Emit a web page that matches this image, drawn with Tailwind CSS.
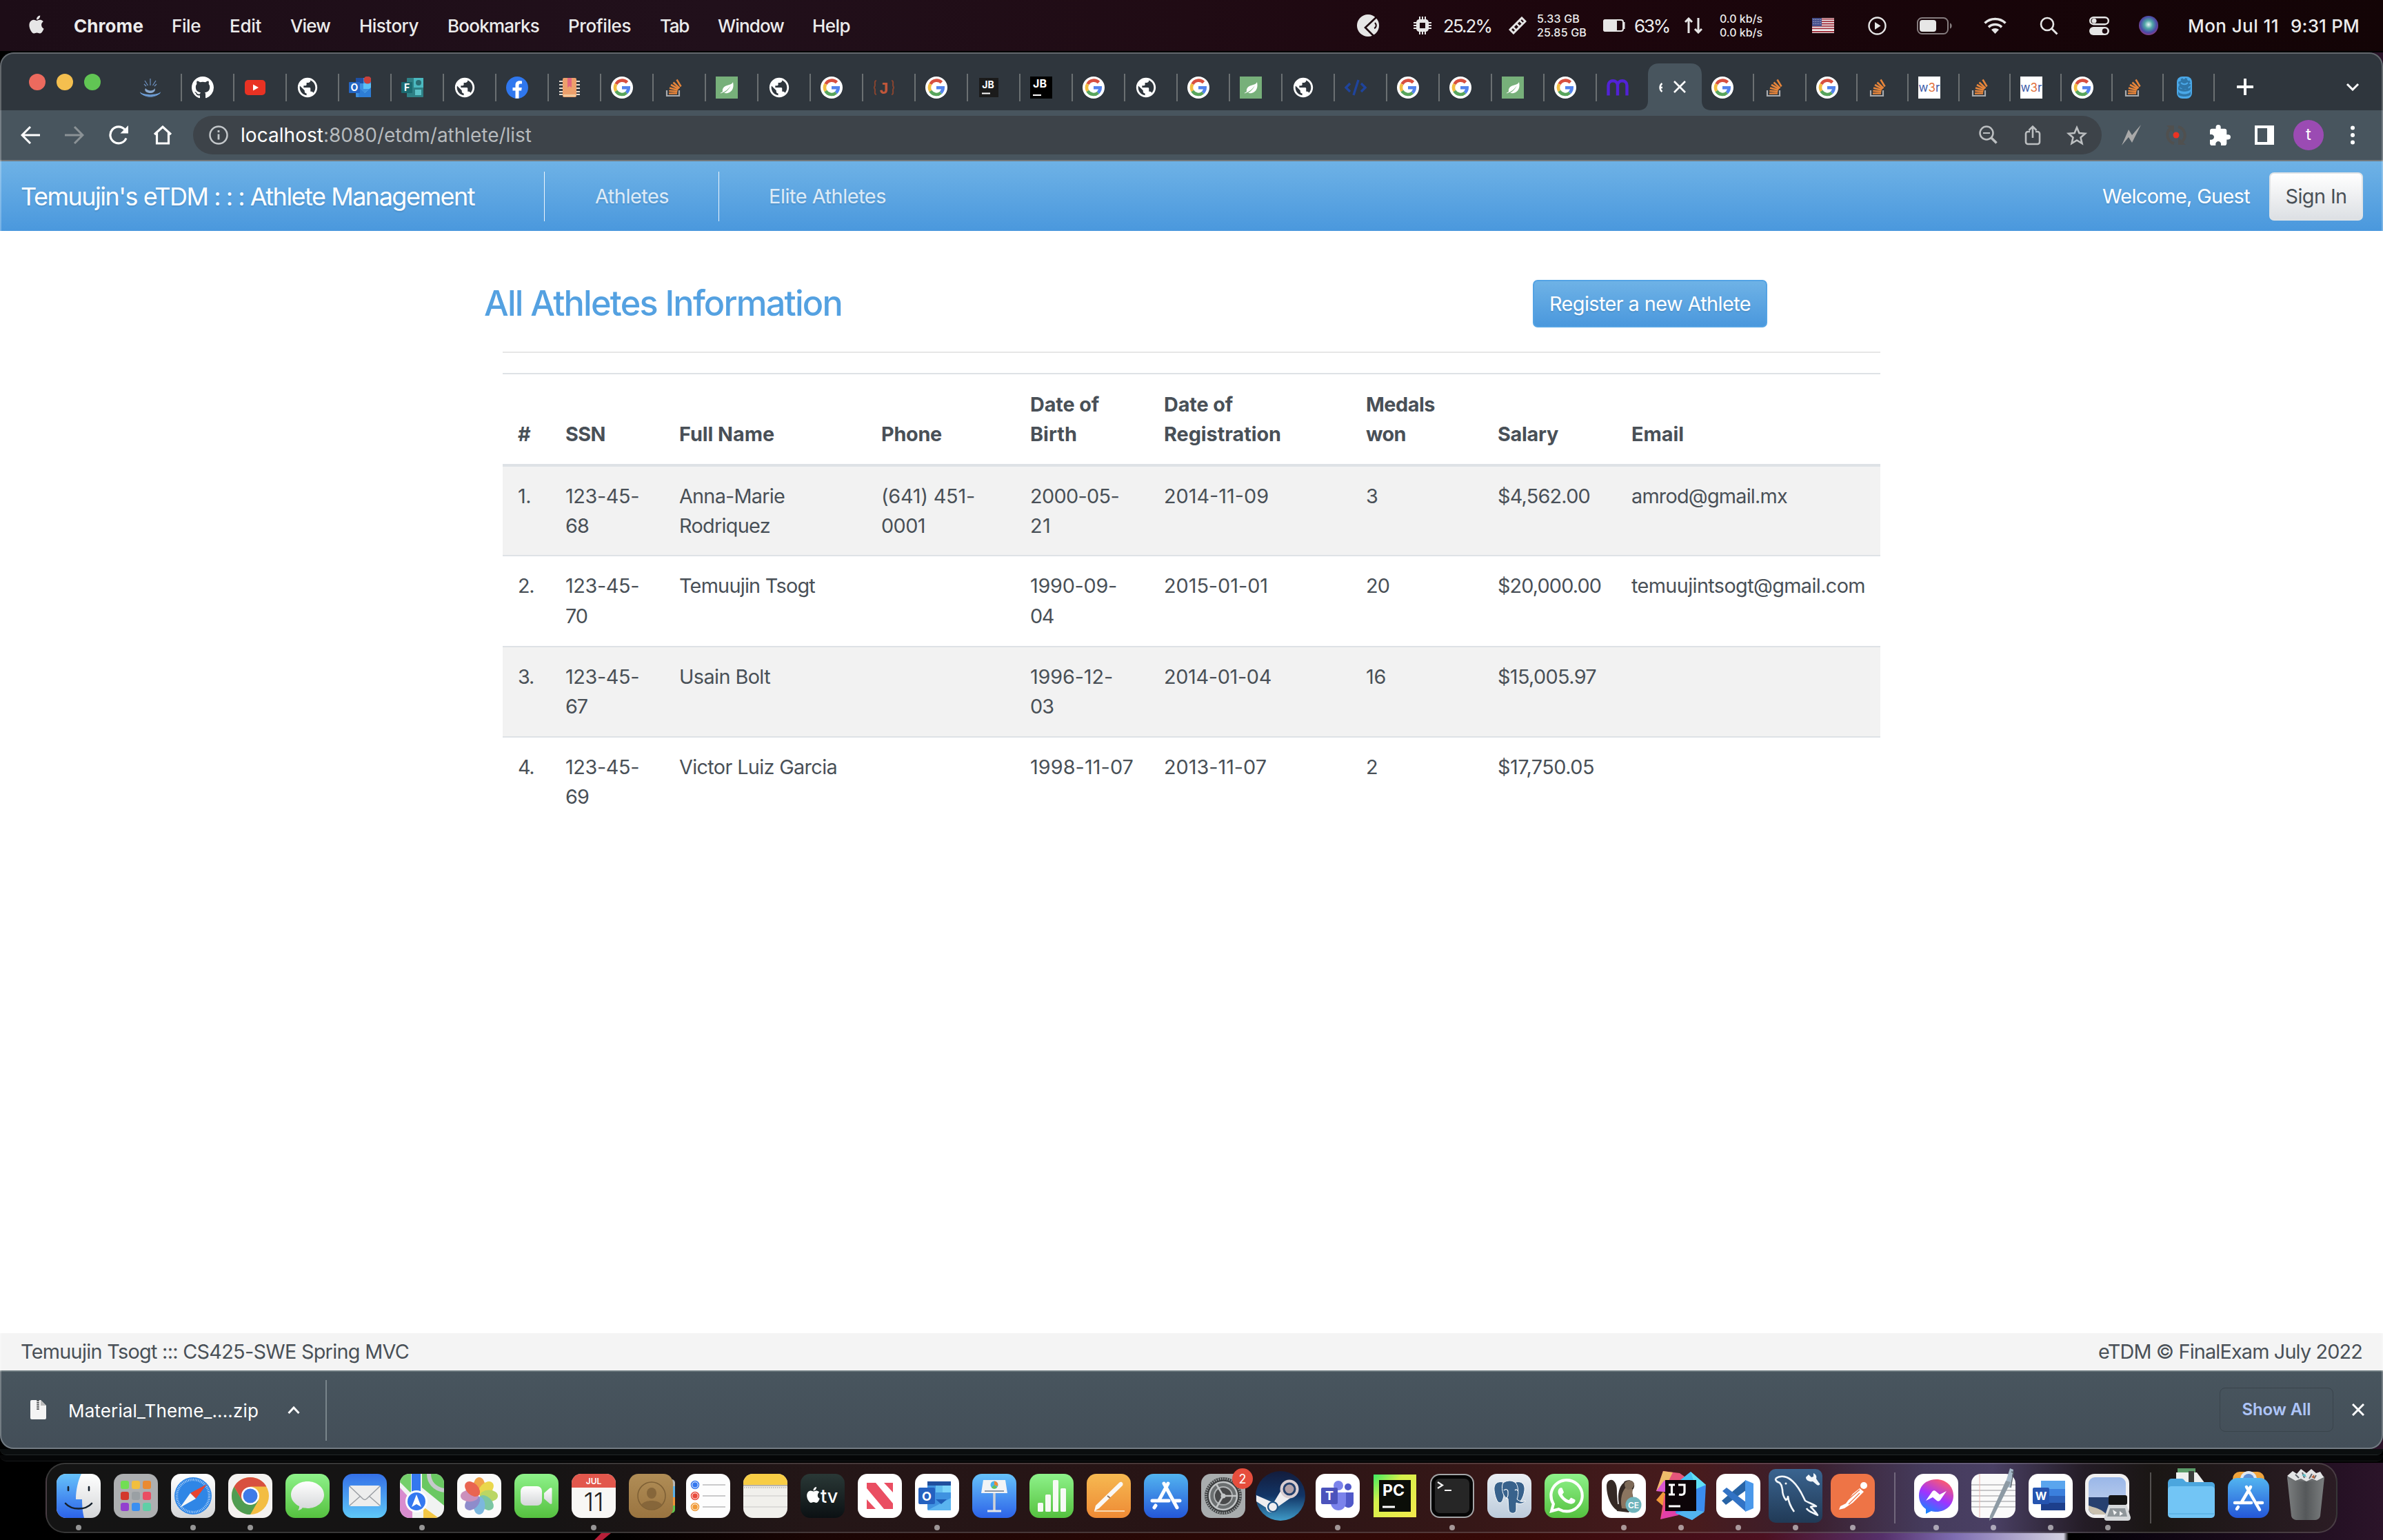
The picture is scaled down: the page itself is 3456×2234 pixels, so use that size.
<!DOCTYPE html>
<html lang="en">
<head>
<meta charset="utf-8">
<title>Athlete Management</title>
<script src="https://cdn.jsdelivr.net/npm/@tailwindcss/browser@4"></script>
</head>
<body class="w-[3456px] h-[2234px] overflow-hidden bg-black font-['Inter','Liberation_Sans',sans-serif]">

<svg class="absolute h-0 w-0" xmlns="http://www.w3.org/2000/svg">
  <defs>
    <linearGradient id="gGreen" x1="0" y1="0" x2="0" y2="1"><stop offset="0" stop-color="#8ef28a"/><stop offset="1" stop-color="#55c13f"/></linearGradient>
    <linearGradient id="gBlue" x1="0" y1="0" x2="0" y2="1"><stop offset="0" stop-color="#52b4f0"/><stop offset="1" stop-color="#2457d8"/></linearGradient>
    <linearGradient id="gBlueUp" x1="0" y1="0" x2="0" y2="1"><stop offset="0" stop-color="#3470e8"/><stop offset="1" stop-color="#5fc8f8"/></linearGradient>
    <linearGradient id="gWhite" x1="0" y1="0" x2="0" y2="1"><stop offset="0" stop-color="#ffffff"/><stop offset="1" stop-color="#d4d6d8"/></linearGradient>
    <linearGradient id="gOrange" x1="0" y1="0" x2="0" y2="1"><stop offset="0" stop-color="#f6b951"/><stop offset="1" stop-color="#ee8a35"/></linearGradient>
    <linearGradient id="gKey" x1="0" y1="0" x2="0" y2="1"><stop offset="0" stop-color="#66c2fb"/><stop offset="1" stop-color="#2c62e8"/></linearGradient>
    <linearGradient id="gTv" x1="0" y1="0" x2="0" y2="1"><stop offset="0" stop-color="#2a3836"/><stop offset="1" stop-color="#0b1013"/></linearGradient>
    <linearGradient id="gBrown" x1="0" y1="0" x2="0" y2="1"><stop offset="0" stop-color="#b08d56"/><stop offset="1" stop-color="#9a7440"/></linearGradient>
    <linearGradient id="gSteam" x1="0" y1="0" x2="0" y2="1"><stop offset="0" stop-color="#131c3c"/><stop offset=".5" stop-color="#123566"/><stop offset="1" stop-color="#3f9bc8"/></linearGradient>
    <linearGradient id="gPg" x1="0" y1="0" x2="0" y2="1"><stop offset="0" stop-color="#eaeff4"/><stop offset="1" stop-color="#bccbdb"/></linearGradient>
    <linearGradient id="gMysql" x1="0" y1="0" x2="0" y2="1"><stop offset="0" stop-color="#3a6490"/><stop offset="1" stop-color="#213a56"/></linearGradient>
    <linearGradient id="gMsg" x1=".7" y1="0" x2=".2" y2="1"><stop offset="0" stop-color="#ff5b6c"/><stop offset=".5" stop-color="#a033ff"/><stop offset="1" stop-color="#0a8cff"/></linearGradient>
    <linearGradient id="gTrash" x1="0" y1="0" x2="1" y2="0"><stop offset="0" stop-color="#7b7e7f"/><stop offset=".5" stop-color="#55585a"/><stop offset="1" stop-color="#7b7e7f"/></linearGradient>
    <linearGradient id="gPc" x1="0" y1="0" x2="1" y2="1"><stop offset="0" stop-color="#3bea62"/><stop offset=".35" stop-color="#d6f04b"/><stop offset="1" stop-color="#f4ea4c"/></linearGradient>
    <linearGradient id="gSea" x1="0" y1="0" x2="0" y2="1"><stop offset="0" stop-color="#9ab7e8"/><stop offset="1" stop-color="#c6d4ee"/></linearGradient>
    <radialGradient id="gSiri" cx=".5" cy=".45" r=".6"><stop offset="0" stop-color="#e9f6f6"/><stop offset=".35" stop-color="#4fa7a5"/><stop offset=".7" stop-color="#4a4aa8"/><stop offset="1" stop-color="#a33c7a"/></radialGradient>
  </defs>

  <!-- favicons -->
  <symbol id="f-java" viewBox="0 0 32 32"><path d="M16 13V3M12.500 13 8 6M19.500 13l4.500-7M10 14l-3-3M22 14l3-3" stroke="#6f94c4" stroke-width="1.200" fill="none"/><path d="M1 22c0 9 30 9 30 0-3 5.500-27 5.500-30 0z" fill="#6f9fd8"/><path d="M9 17c-3 5 4 7.500 8 7s7-3 5.500-7c-1 4-10 5-13.500 0z" fill="#8aa9cf"/><path d="M5 26c5 4 17 4 22 0-4 5-18 5-22 0z" fill="#6f9fd8"/></symbol>
  <symbol id="f-github" viewBox="0 0 16 16"><path fill="#fff" d="M8 0C3.580 0 0 3.580 0 8c0 3.540 2.290 6.530 5.470 7.590.4.070.55-.17.55-.38 0-.19-.01-.82-.01-1.490-2.010.37-2.530-.49-2.690-.94-.09-.23-.48-.94-.82-1.130-.28-.15-.68-.52-.01-.53.63-.01 1.080.58 1.230.82.72 1.210 1.870.87 2.330.66.07-.52.28-.87.51-1.070-1.780-.2-3.640-.89-3.640-3.950 0-.87.31-1.590.82-2.150-.08-.2-.36-1.020.08-2.120 0 0 .67-.21 2.200.82.64-.18 1.320-.27 2-.27s1.360.09 2 .27c1.530-1.040 2.200-.82 2.200-.82.44 1.100.16 1.920.08 2.120.51.56.82 1.270.82 2.150 0 3.070-1.870 3.750-3.650 3.950.29.25.54.73.54 1.480 0 1.070-.01 1.930-.01 2.200 0 .21.15.46.55.38A8.010 8.010 0 0 0 16 8c0-4.420-3.580-8-8-8z"/></symbol>
  <symbol id="f-yt" viewBox="0 0 32 32"><rect x="1" y="5" width="30" height="22" rx="5" fill="#e93223"/><path d="M13 11.500v9l8-4.500z" fill="#fff"/></symbol>
  <symbol id="f-globe" viewBox="0 0 32 32"><path transform="translate(-1 -1) scale(1.417)" fill="#fff" d="M12 2C6.480 2 2 6.480 2 12s4.480 10 10 10 10-4.480 10-10S17.520 2 12 2zm-1 17.930c-3.950-.49-7-3.850-7-7.930 0-.62.08-1.210.21-1.790L9 15v1c0 1.100.9 2 2 2v1.930zm6.900-2.540c-.26-.81-1-1.390-1.900-1.390h-1v-3c0-.55-.45-1-1-1H8v-2h2c.55 0 1-.45 1-1V7h2c1.100 0 2-.9 2-2v-.41c2.930 1.190 5 4.060 5 7.410 0 2.080-.8 3.970-2.100 5.390z"/></symbol>
  <symbol id="f-outlook" viewBox="0 0 32 32"><rect x="10" y="2" width="22" height="28" rx="1" fill="#3c8fe0"/><path d="M10 2h11v8H10z" fill="#1e4fa3"/><path d="M21 10h11v8H21z" fill="#5cc0f5"/><path d="M14 30l18-14v14z" fill="#52a9ea"/><path d="M14 16l9 8 9-8v14H14z" fill="#2d7dd6"/><rect x="0" y="8" width="16" height="16" rx="1" fill="#2566c4"/><text x="8" y="21" font-size="14" font-weight="700" fill="#fff" text-anchor="middle">O</text><circle cx="27" cy="5" r="5.500" fill="#c8403a"/></symbol>
  <symbol id="f-forms" viewBox="0 0 32 32"><rect x="8" y="2" width="24" height="28" rx="1" fill="#2f8186"/><path d="M18 2h14v14H18z" fill="#4bb9c0"/><circle cx="25" cy="9" r="4" fill="#2a6d73"/><rect x="20" y="19" width="9" height="8" fill="#5cc2c8"/><rect x="0" y="8" width="16" height="16" rx="1" fill="#1b6a70"/><text x="8" y="21" font-size="14" font-weight="700" fill="#fff" text-anchor="middle">F</text></symbol>
  <symbol id="f-fb" viewBox="0 0 32 32"><circle cx="16" cy="16" r="16" fill="#2f77ee"/><path fill="#fff" d="M13.500 31.800V20.500h-4V16h4v-3.500c0-4 2.400-6.200 6-6.200 1.700 0 3.500.3 3.500.3v3.900h-2c-2 0-2.500 1.200-2.500 2.500v3h4.300l-.7 4.500h-3.600v11.300z"/></symbol>
  <symbol id="f-book" viewBox="0 0 32 32"><path d="M1 7h6M1 12h6M1 17h6M1 22h6M1 26h6M25 7h6M25 12h6M25 17h6M25 22h6M25 26h6" stroke="#e8ddd2" stroke-width="2"/><rect x="6" y="2" width="20" height="28" rx="2" fill="#eda06c"/><path d="M13 2h6v14l-3-2-3 2z" fill="#e4687c"/><path d="M7 26h18v3H7z" fill="#f3c99a"/></symbol>
  <symbol id="f-google" viewBox="0 0 32 32"><circle cx="16" cy="16" r="16" fill="#fff"/><g fill="none" stroke-width="4.600"><path d="M23.500 8.600A10 10 0 0 0 7.500 11" stroke="#d8503f"/><path d="M7.400 11a10 10 0 0 0 0 10" stroke="#f2bd42"/><path d="M7.400 21a10 10 0 0 0 15.200 2.500" stroke="#58a55c"/><path d="M22.500 23.500A10 10 0 0 0 25.700 16.300H16" stroke="#5383ec"/></g></symbol>
  <symbol id="f-so" viewBox="0 0 32 32"><path d="M5 20v8h18v-8" fill="none" stroke="#a9abae" stroke-width="2.200"/><g stroke="#e7853a" stroke-width="2.600"><path d="M8 24.500h12"/><path d="M8.300 20.800l12 1.200"/><path d="M9 16.500l11.800 3.200"/><path d="M11 12l11 6"/><path d="M14.500 8.500l9 8.500"/><path d="M19.500 4.500l6 10"/></g></symbol>
  <symbol id="f-leaf" viewBox="0 0 32 32"><rect width="32" height="32" fill="#77b07a"/><path fill="#fff" d="M25 8c1.500 7 0 12-5 15-3 1.500-6 1.500-8 .8 4-2 7.500-6 10-10.800-3.500 5-7.500 8.500-12.500 10.500L7 24.500v-1c1.500-.4 2.500-1 3-2C9 16 14 13.500 18 12.500c3-.8 6-2 7-4.500z"/></symbol>
  <symbol id="f-jx" viewBox="0 0 32 32"><text x="16" y="25" font-size="24" font-weight="700" font-family="Liberation Mono" fill="#c0573a" text-anchor="middle">J</text><path d="M5 6c-3 0-2 4-2 6s-1 4-2 4c1 0 2 2 2 4s-1 6 2 6M27 6c3 0 2 4 2 6s1 4 2 4c-1 0-2 2-2 4s1 6-2 6" fill="none" stroke="#87442f" stroke-width="2"/></symbol>
  <symbol id="f-jb" viewBox="0 0 32 32"><rect x="2" y="2" width="28" height="28" fill="#1b1b1b"/><text x="15" y="17" font-size="14" font-weight="700" fill="#fff" text-anchor="middle">JB</text><path d="M6 24.500h12" stroke="#fff" stroke-width="2"/></symbol>
  <symbol id="f-jb2" viewBox="0 0 32 32"><rect width="32" height="32" fill="#000"/><text x="14" y="16" font-size="16" font-weight="700" fill="#fff" text-anchor="middle">JB</text><path d="M4 27h12" stroke="#fff" stroke-width="2.200"/></symbol>
  <symbol id="f-code" viewBox="0 0 32 32"><path d="M8 10l-6 6 6 6M24 10l6 6-6 6M20 5l-7 22" fill="none" stroke="#1f449c" stroke-width="3.400"/></symbol>
  <symbol id="f-m" viewBox="0 0 32 32"><path d="M2.500 27.500V13c0-9 13.500-9 13.500 0v14.500M16 13c0-9 13.500-9 13.500 0v14.500" fill="none" stroke="#5222d6" stroke-width="4.400"/></symbol>
  <symbol id="f-w3r" viewBox="0 0 32 32"><rect width="32" height="32" fill="#fff"/><text x="16" y="22" font-size="17" text-anchor="middle" fill="#3c5ba9">w<tspan fill="#e2703a">3</tspan>r</text></symbol>
  <symbol id="f-db" viewBox="0 0 32 32"><rect x="5" y="0" width="22" height="32" rx="8" fill="#4aa8e8"/><circle cx="16" cy="11" r="7.500" fill="#2f76a8" stroke="#2f76a8" stroke-width="3" stroke-dasharray="3 3"/><path d="M7 14c1 6 17 6 18 0v4c-1 5-17 5-18 0zM7 21c1 6 17 6 18 0v5c-1 4-17 4-18 0z" fill="#2f76a8"/><path d="M11 9c3 3 7 3 10 0" stroke="#4aa8e8" stroke-width="2" fill="none"/></symbol>

  <!-- dock -->
  <symbol id="d-finder" viewBox="0 0 64 64"><rect width="64" height="64" rx="14" fill="url(#gWhite)"/><path d="M14 0h22c-5 10-8 24-8 37h9c0 10 1 20 3 27H14A14 14 0 0 1 0 50V14A14 14 0 0 1 14 0z" fill="url(#gKey)"/><path d="M17 19v5M47 19v5M13 43c9 10 29 10 38 0" stroke="#14202c" stroke-width="2.600" stroke-linecap="round" fill="none"/></symbol>
  <symbol id="d-launch" viewBox="0 0 64 64"><rect width="64" height="64" rx="14" fill="#adafb1"/><g><rect x="10" y="10" width="12" height="12" rx="3" fill="#72de54"/><rect x="26" y="10" width="12" height="12" rx="3" fill="#f2bf3e"/><rect x="42" y="10" width="12" height="12" rx="3" fill="#ea8a32"/><rect x="10" y="26" width="12" height="12" rx="3" fill="#d3382c"/><rect x="26" y="26" width="12" height="12" rx="3" fill="#9aa0a4"/><rect x="42" y="26" width="12" height="12" rx="3" fill="#ea4e62"/><rect x="10" y="42" width="12" height="12" rx="3" fill="#9340cf"/><rect x="26" y="42" width="12" height="12" rx="3" fill="#3b8ff0"/><rect x="42" y="42" width="12" height="12" rx="3" fill="#5fcfa6"/></g></symbol>
  <symbol id="d-safari" viewBox="0 0 64 64"><rect width="64" height="64" rx="14" fill="url(#gWhite)"/><circle cx="32" cy="32" r="27" fill="#2f86e6"/><circle cx="32" cy="32" r="23.500" fill="none" stroke="#cfe4fa" stroke-width="3.500" stroke-dasharray=".8 1.650"/><path d="M52 15 36 36l-8-8z" fill="#e8442f"/><path d="M13 49l15-21 8 8z" fill="#f4f6f8"/></symbol>
  <symbol id="d-chrome" viewBox="0 0 64 64"><rect width="64" height="64" rx="14" fill="#f4f2f0"/><circle cx="32" cy="32" r="27" fill="#f3bd42"/><path d="M8.600 18.500 20.300 38.800 43.700 38.800 32 59A27 27 0 0 1 8.600 18.500z" fill="#4f9d52"/><path d="M8.600 18.500A27 27 0 0 1 55.400 18.500H32L20.300 38.800z" fill="#d8503f"/><circle cx="32" cy="32" r="13" fill="#fff"/><circle cx="32" cy="32" r="10.500" fill="#3f7be8"/></symbol>
  <symbol id="d-messages" viewBox="0 0 64 64"><rect width="64" height="64" rx="14" fill="url(#gGreen)"/><path d="M32 11c13 0 24 8.500 24 19.500S45 50 32 50c-2.500 0-5-.3-7-.9-1.500 2.200-4 3.800-7 4 1.500-1.500 2.200-4 2-6C13 43.500 8 37.500 8 30.500 8 19.500 19 11 32 11z" fill="url(#gWhite)"/></symbol>
  <symbol id="d-mail" viewBox="0 0 64 64"><rect width="64" height="64" rx="14" fill="url(#gBlueUp)"/><rect x="9" y="17" width="46" height="30" rx="3.500" fill="#ededed"/><path d="M10 18l19 18c2 2 4 2 6 0l19-18M10 46l16-14M54 46 38 32" fill="none" stroke="#9b9fa4" stroke-width="1.500"/></symbol>
  <symbol id="d-maps" viewBox="0 0 64 64"><clipPath id="cm"><rect width="64" height="64" rx="14"/></clipPath><g clip-path="url(#cm)"><rect width="64" height="64" fill="#f1f3f2"/><path d="M0 0h16v28L0 12z" fill="#74cf6b"/><path d="M32 0h32v46L32 20z" fill="#6ac862"/><path d="M0 20l18 20v24H0z" fill="#d98ccf"/><path d="M34 64V48l22 16z" fill="#f3c744"/><path d="M17 0h13v40H17z" fill="#3478f0"/><path d="M42 0c0 12 8 22 22 24" stroke="#c6c9cc" stroke-width="6" fill="none"/><circle cx="24" cy="40" r="16" fill="#fff"/><circle cx="24" cy="40" r="13" fill="#3478f0"/><path d="M24 30l7 18-7-4-7 4z" fill="#fff"/></g></symbol>
  <symbol id="d-photos" viewBox="0 0 64 64"><rect width="64" height="64" rx="14" fill="#fbfbfa"/><g opacity=".9"><ellipse cx="32" cy="18" rx="8.500" ry="13" fill="#f09a37"/><ellipse cx="32" cy="18" rx="8.500" ry="13" fill="#e9d43a" transform="rotate(45 32 32)"/><ellipse cx="32" cy="18" rx="8.500" ry="13" fill="#b4d254" transform="rotate(90 32 32)"/><ellipse cx="32" cy="18" rx="8.500" ry="13" fill="#6fc19a" transform="rotate(135 32 32)"/><ellipse cx="32" cy="18" rx="8.500" ry="13" fill="#6fb0dc" transform="rotate(180 32 32)"/><ellipse cx="32" cy="18" rx="8.500" ry="13" fill="#8380c6" transform="rotate(225 32 32)"/><ellipse cx="32" cy="18" rx="8.500" ry="13" fill="#c685b6" transform="rotate(270 32 32)"/><ellipse cx="32" cy="18" rx="8.500" ry="13" fill="#e8543f" transform="rotate(315 32 32)"/></g></symbol>
  <symbol id="d-facetime" viewBox="0 0 64 64"><rect width="64" height="64" rx="14" fill="url(#gGreen)"/><rect x="9" y="18" width="31" height="28" rx="7" fill="url(#gWhite)"/><path d="M43 28l8-7c2-1.500 3.500-1 3.500 1v20c0 2-1.500 2.500-3.500 1l-8-7z" fill="url(#gWhite)"/></symbol>
  <symbol id="d-cal" viewBox="0 0 64 64"><rect width="64" height="64" rx="14" fill="#f8f7f5"/><path d="M14 0h36a14 14 0 0 1 14 14v6H0v-6A14 14 0 0 1 14 0z" fill="#e2574c"/><text x="32" y="15" font-size="12" font-weight="600" fill="#fff" text-anchor="middle">JUL</text><text x="32" y="54" font-size="37" font-weight="300" fill="#222" text-anchor="middle">11</text></symbol>
  <symbol id="d-contacts" viewBox="0 0 68 64"><path d="M60 8h2a5 5 0 0 1 5 5v5h-7z" fill="#b9b9b6"/><path d="M60 18h7v16h-7z" fill="#59b1e8"/><path d="M60 34h7v12h-7z" fill="#ee9437"/><path d="M60 46h7v6a5 5 0 0 1-5 5h-2z" fill="#5fc84c"/><rect width="64" height="64" rx="14" fill="url(#gBrown)"/><g fill="none" stroke="#7d5f35" stroke-width="1.500"><circle cx="33" cy="32" r="20"/></g><ellipse cx="33" cy="28" rx="7" ry="8" fill="#86663a"/><path d="M18 45c5-8 25-8 30 0-8 9-22 9-30 0z" fill="#86663a"/></symbol>
  <symbol id="d-rem" viewBox="0 0 64 64"><rect width="64" height="64" rx="14" fill="#fdfdfd"/><g stroke-width="1.500"><circle cx="13" cy="16" r="5.500" fill="#fff" stroke="#3577ee"/><circle cx="13" cy="32" r="5.500" fill="#fff" stroke="#e84b3c"/><circle cx="13" cy="48" r="5.500" fill="#fff" stroke="#f09a37"/></g><circle cx="13" cy="16" r="3.800" fill="#3577ee"/><circle cx="13" cy="32" r="3.800" fill="#e84b3c"/><circle cx="13" cy="48" r="3.800" fill="#f09a37"/><path d="M24 16h33M24 32h33M24 48h33" stroke="#b9b9bb" stroke-width="1.500"/></symbol>
  <symbol id="d-notes" viewBox="0 0 64 64"><rect width="64" height="64" rx="14" fill="#f1f0ec"/><path d="M14 0h36a14 14 0 0 1 14 14v2H0v-2A14 14 0 0 1 14 0z" fill="#f8cd45"/><path d="M0 17h64" stroke="#a3a09a" stroke-width="1.500"/><path d="M1 20h62" stroke="#b5b3ad" stroke-width="1.500" stroke-dasharray="1.500 1.500"/><path d="M0 32h64M0 48h64" stroke="#c9c8c5" stroke-width="1.200"/></symbol>
  <symbol id="apple" viewBox="0 0 24 24"><path d="M12.152 6.896c-.948 0-2.415-1.078-3.960-1.040-2.040.027-3.910 1.183-4.961 3.014-2.117 3.675-.546 9.103 1.519 12.090 1.013 1.454 2.208 3.090 3.792 3.039 1.520-.065 2.090-.987 3.935-.987 1.831 0 2.350.987 3.960.948 1.637-.026 2.676-1.480 3.676-2.948 1.156-1.688 1.636-3.325 1.662-3.415-.039-.013-3.182-1.221-3.220-4.857-.026-3.040 2.480-4.494 2.597-4.559-1.429-2.090-3.623-2.324-4.390-2.376-2-.156-3.675 1.090-4.610 1.090zM15.530 3.830c.843-1.012 1.400-2.427 1.245-3.830-1.207.052-2.662.805-3.532 1.818-.78.896-1.454 2.338-1.273 3.714 1.338.104 2.715-.688 3.559-1.701"/></symbol>
  <symbol id="d-tv" viewBox="0 0 64 64"><rect width="64" height="64" rx="14" fill="url(#gTv)"/><use href="#apple" x="7" y="19" width="23" height="23" fill="#fff"/><text x="29" y="42" font-size="27" font-weight="500" fill="#fff">tv</text></symbol>
  <symbol id="d-news" viewBox="0 0 64 64"><rect width="64" height="64" rx="14" fill="#fff"/><path d="M13 13h13l25 30v8H38L13 21zM38 13h13v14zM13 37v14h13z" fill="#ea4e62"/></symbol>
  <symbol id="d-outlook" viewBox="0 0 64 64"><rect width="64" height="64" rx="14" fill="#fff"/><rect x="18" y="11" width="34" height="42" rx="2" fill="#3f92e0"/><path d="M18 11h34v6H18z" fill="#204f9e"/><path d="M30 17h22v10H30z" fill="#63bff0"/><path d="M40 17h12v10H40z" fill="#7cd4fa"/><path d="M18 53l34-18v18z" fill="#5ab4f0"/><path d="M30 37h16l-8 7z" fill="#1f5eb8"/><rect x="5" y="20" width="24" height="24" rx="2" fill="#2461c0"/><text x="17" y="38.500" font-size="18" font-weight="700" fill="#fff" text-anchor="middle">O</text></symbol>
  <symbol id="d-key" viewBox="0 0 64 64"><rect width="64" height="64" rx="14" fill="url(#gKey)"/><path d="M16 9h32l3 19H13z" fill="#f2f4f6"/><path d="M18 24h28v2H18z" fill="#8c98a6"/><circle cx="32" cy="16" r="5.500" fill="#49b3ee"/><path d="M32 16v-5.500A5.500 5.500 0 0 1 37 18z" fill="#ee8a35"/><path d="M32 16l4 4a5.500 5.500 0 0 1-8 0z" fill="#67c455"/><path d="M32 28v26" stroke="#cfd3d8" stroke-width="3.500"/><path d="M22 54h20" stroke="#e4e6e8" stroke-width="3"/></symbol>
  <symbol id="d-num" viewBox="0 0 64 64"><rect width="64" height="64" rx="14" fill="url(#gGreen)"/><g fill="#f7faf5"><rect x="12" y="42" width="8" height="13" rx="1.500"/><rect x="23" y="30" width="8" height="25" rx="1.500"/><rect x="34" y="9" width="8" height="46" rx="1.500"/><rect x="45" y="21" width="8" height="34" rx="1.500"/></g></symbol>
  <symbol id="d-pages" viewBox="0 0 64 64"><rect width="64" height="64" rx="14" fill="url(#gOrange)"/><path d="M11 54h44" stroke="#f8d6ae" stroke-width="2"/><path d="M47 13c3-3 7 0 5 4L18 50l-7 4 2-8z" fill="#faf8f5"/><path d="M30 32l4 3" stroke="#8b7560" stroke-width="2"/></symbol>
  <symbol id="d-store" viewBox="0 0 64 64"><rect width="64" height="64" rx="14" fill="url(#gBlue)"/><g stroke="#fff" stroke-width="5" stroke-linecap="round"><path d="M35 14 22 38M29 14l19 35M12 39h24M45 39h7M17 46l-2 3"/></g></symbol>
  <symbol id="d-settings" viewBox="0 0 64 64"><rect width="64" height="64" rx="14" fill="#a9adae"/><circle cx="32" cy="32" r="27" fill="#3a3c3d"/><circle cx="32" cy="32" r="25" fill="none" stroke="#8f9394" stroke-width="3.500" stroke-dasharray="1.800 1.500"/><circle cx="32" cy="32" r="20" fill="#6b6f70" stroke="#c2c5c6" stroke-width="2.500"/><circle cx="32" cy="32" r="13" fill="#48494a" stroke="#b0b3b4" stroke-width="2"/><path d="M32 32h20M32 32 22 15M32 32 22 49" stroke="#c2c5c6" stroke-width="2.500"/><circle cx="32" cy="32" r="3.500" fill="#c2c5c6"/></symbol>
  <symbol id="d-steam" viewBox="0 0 72 72"><circle cx="36" cy="36" r="36" fill="url(#gSteam)"/><path d="M1 35l25 11 12-20 14 12-20 14c0 6-4 8-9 8s-8-3-8-7L1 44z" fill="#efeef0"/><circle cx="49" cy="26" r="13.500" fill="#d9cdd0"/><circle cx="49" cy="26" r="8" fill="#b3a2a8" stroke="#24406c" stroke-width="3"/><circle cx="25" cy="52" r="7" fill="none" stroke="#1c5284" stroke-width="2.200"/></symbol>
  <symbol id="d-teams" viewBox="0 0 64 64"><rect width="64" height="64" rx="14" fill="#fff"/><circle cx="47" cy="19" r="5" fill="#5059c9"/><circle cx="33" cy="17" r="7" fill="#7b83eb"/><path d="M40 27h15v13a7.500 7.500 0 0 1-15 3z" fill="#5059c9"/><path d="M22 27h22v15a11 11 0 0 1-22 0z" fill="#7b83eb"/><rect x="8" y="20" width="24" height="24" rx="2" fill="#4b53bc"/><text x="20" y="38" font-size="18" font-weight="700" fill="#fff" text-anchor="middle">T</text></symbol>
  <symbol id="d-pc" viewBox="0 0 64 64"><rect x="1" y="1" width="62" height="62" fill="url(#gPc)"/><rect x="9" y="9" width="46" height="46" fill="#0b0e08"/><text x="30" y="32" font-size="23" font-weight="700" fill="#fff" text-anchor="middle">PC</text><path d="M14 48h18" stroke="#fff" stroke-width="3"/></symbol>
  <symbol id="d-term" viewBox="0 0 64 64"><rect x="0" y="0" width="64" height="64" rx="14" fill="#a4a6a8"/><rect x="2" y="2" width="60" height="60" rx="12" fill="#050505"/><rect x="7" y="7" width="50" height="50" rx="7" fill="#262626"/><path d="M11 12l7 4.500-7 4.500M21 24h10" stroke="#f4f4f4" stroke-width="2.200" fill="none"/></symbol>
  <symbol id="d-pg" viewBox="0 0 64 64"><rect width="64" height="64" rx="14" fill="url(#gPg)"/><g fill="#38628c" stroke="#fff" stroke-width="1"><path d="M23 12c-9-2-14 3-13 12 1 8 4 18 8 18s5-6 6-10z"/><path d="M41 12c9-2 14 3 13 12-1 8-5 17-9 17s-5-5-6-9z"/><path d="M23 13c6-4 13-4 18 0 4 4 5 16 2 24l5 3c3 1 6 0 7-1-1 4-8 6-13 3v10c0 7-10 7-11 0l-1-16c-9-2-10-19-7-23z"/></g><path d="M24 24c2-2 6-2 6 2s1 8-3 10M40 24c2-2 4-1 4 1" stroke="#fff" stroke-width="1.200" fill="none"/></symbol>
  <symbol id="d-wa" viewBox="0 0 64 64"><rect width="64" height="64" rx="14" fill="url(#gGreen)"/><path transform="translate(7 7) scale(2.080)" fill="#fff" d="M17.472 14.382c-.297-.149-1.758-.867-2.030-.967-.273-.099-.471-.148-.67.15-.197.297-.767.966-.94 1.164-.173.199-.347.223-.644.075-.297-.15-1.255-.463-2.390-1.475-.883-.788-1.480-1.761-1.653-2.059-.173-.297-.018-.458.13-.606.134-.133.298-.347.446-.52.149-.174.198-.298.298-.497.099-.198.05-.371-.025-.52-.075-.149-.669-1.612-.916-2.207-.242-.579-.487-.5-.669-.51-.173-.008-.371-.01-.57-.01-.198 0-.52.074-.792.372-.272.297-1.040 1.016-1.040 2.479 0 1.462 1.065 2.875 1.213 3.074.149.198 2.096 3.200 5.077 4.487.709.306 1.262.489 1.694.625.712.227 1.360.195 1.871.118.571-.085 1.758-.719 2.006-1.413.248-.694.248-1.289.173-1.413-.074-.124-.272-.198-.57-.347m-5.421 7.403h-.004a9.870 9.870 0 0 1-5.031-1.378l-.361-.214-3.741.982.998-3.648-.235-.374a9.860 9.860 0 0 1-1.510-5.260c.001-5.450 4.436-9.884 9.888-9.884 2.640 0 5.122 1.030 6.988 2.898a9.825 9.825 0 0 1 2.893 6.994c-.003 5.450-4.437 9.884-9.885 9.884m8.413-18.297A11.815 11.815 0 0 0 12.050 0C5.495 0 .16 5.335.157 11.892c0 2.096.547 4.142 1.588 5.945L.057 24l6.305-1.654a11.882 11.882 0 0 0 5.683 1.448h.005c6.554 0 11.890-5.335 11.893-11.893a11.821 11.821 0 0 0-3.480-8.413Z"/></symbol>
  <symbol id="d-dbv" viewBox="0 0 64 64"><rect width="64" height="64" rx="14" fill="#fff"/><path d="M7 18c0-10 9-13 13-4 4 8 0 20 4 40-12-6-17-24-17-36z" fill="#352a25"/><path d="M22 54c-1-16 0-34 10-42 5-5 14-3 15 3 1 5-2 8-4 10 3 8 6 22-4 31z" fill="#352a25"/><path d="M29 50c-3-14 1-26 6-30 4-3 9 0 10 4-2 3 3 20-4 27z" fill="#8b7560"/><path d="M33 14c4-6 12-5 14 0 0 5-3 8-8 9-4 0-6-4-6-9z" fill="#7d6a58"/><path d="M24 44c-2-14 0-26 8-32" stroke="#fff" stroke-width="1.500" fill="none"/><circle cx="46" cy="45" r="11.500" fill="#6fb4bc"/><text x="46" y="49.500" font-size="12" font-weight="600" fill="#fff" text-anchor="middle">CE</text></symbol>
  <symbol id="d-ij" viewBox="0 0 72 72"><path d="M10 0l24 3 14 10L20 30 0 29z" fill="#e6567a"/><path d="M10 0l14 2-12 24-12 3z" fill="#eebc6a"/><path d="M0 29l12-16 8 18z" fill="#d957d2"/><path d="M0 42l10-12 12 12-6 14z" fill="#f19a3a"/><path d="M12 34l10 10-16 26 4-24z" fill="#ee4f7c"/><path d="M6 70l10-26 26 14-10 6z" fill="#e23fa8"/><path d="M34 14L50 1l22 19-2 38-18 13-24-10z" fill="#3a8cf0"/><path d="M34 14L50 1l12 18z" fill="#46c3f4"/><path d="M50 1l22 19-14 6z" fill="#5fe0f5"/><path d="M28 61l24 10 18-12-20-4z" fill="#52b4f0"/><rect x="13" y="13" width="45" height="45" fill="#0c0408"/><g stroke="#fff" stroke-width="3.200" fill="none"><path d="M18 20h9M22.500 20v14M18 34h9M32 20h9v10c0 4-3 5-8 4"/><path d="M18 51h17" stroke-width="3"/></g></symbol>
  <symbol id="d-vsc" viewBox="0 0 64 64"><rect width="64" height="64" rx="14" fill="#fff"/><path d="M43 9 8 39l6 6 29-21z" fill="#2763a5"/><path d="M9 25l6-5 28 21v14z" fill="#3273c5"/><path d="M42 9l12 5v36l-12 5z" fill="#4a98ea"/></symbol>
  <symbol id="d-mysql" viewBox="0 0 78 78"><rect width="78" height="78" rx="10" fill="url(#gMysql)"/><g fill="none" stroke="#f2f6fa" stroke-width="2.600" stroke-linejoin="round"><path d="M10 14c8-6 18-3 25 4 10 9 14 20 18 28 5 3 10 4 16 8-3 0-7 0-8 1 4 4 7 7 10 12-6-4-14-5-16-10M10 14c0 4 3 5 6 6 4 4 3 7 4 10 0 6 2 11 5 15 2-1 3-3 3-5 1 9 4 15 9 22"/></g><circle cx="25" cy="21" r="1.500" fill="#fff"/><path d="M58 8l4 4 3-1V6c4 2 5 5 4 8l4 6c3 2 0 5-3 3l-6-5c-4 1-10-1-10-6z" fill="#f2f6fa"/></symbol>
  <symbol id="d-postman" viewBox="0 0 64 64"><rect width="64" height="64" rx="14" fill="#ee7446"/><circle cx="48" cy="17" r="5" fill="#fff"/><path d="M42 21l6 5-16 16-12 8-8 2 2-5 8-4 10-14z" fill="#fff"/><path d="M20 42l22-19M26 44l16-16" stroke="#ee7446" stroke-width="1.200"/></symbol>
  <symbol id="d-msgr" viewBox="0 0 64 64"><rect width="64" height="64" rx="14" fill="#fff"/><path d="M32 8c14.500 0 25 10 25 23.500S46.500 55 32 55c-2.500 0-5-.4-7-1l-8 4v-7C10.500 46.500 7 39.500 7 31.500 7 18 17.500 8 32 8z" fill="url(#gMsg)"/><path d="M17 39l9-13c1.500-2 4-2 5-1l6 5 10-5-9 13c-1.500 2-3.500 2-5 1l-6-5z" fill="#fff"/></symbol>
  <symbol id="d-te" viewBox="0 0 64 76"><rect y="8" width="64" height="64" rx="14" fill="#fafafa"/><path d="M0 24h64M0 32h64M0 40h64M0 48h64M0 56h64" stroke="#b7b7b9" stroke-width="1.400"/><path d="M12 8v63" stroke="#e8b4b0"/><path d="M56 0l5 2-5 26-8-2z" fill="#a5b8c8"/><path d="M50 18l7 2-26 52-5 4 1-7z" fill="#8d9aa4"/><path d="M58 5l3 1-4 22" fill="none" stroke="#56616b" stroke-width="1.400"/></symbol>
  <symbol id="d-word" viewBox="0 0 64 64"><rect width="64" height="64" rx="14" fill="#fff"/><path d="M18 10h35v12H18z" fill="#5aa5ee"/><path d="M18 22h35v10H18z" fill="#3b7fdd"/><path d="M18 32h35v10H18z" fill="#2c5fb8"/><path d="M18 42h35v11H18z" fill="#1d3f8c"/><rect x="6" y="20" width="24" height="24" rx="2" fill="#2554b0"/><text x="18" y="38" font-size="16" font-weight="700" fill="#fff" text-anchor="middle">W</text></symbol>
  <symbol id="d-prev" viewBox="0 0 66 68"><rect width="64" height="64" rx="14" fill="#f1f0f0"/><rect x="5" y="5" width="54" height="54" rx="9" fill="url(#gSea)"/><path d="M5 34h54v16a9 9 0 0 1-9 9H14a9 9 0 0 1-9-9z" fill="#27406f"/><path d="M5 46c8 3 18 4 26 13H14a9 9 0 0 1-9-9z" fill="#c9c0ae"/><rect x="34" y="31" width="27" height="14" rx="3" fill="#141414"/><path d="M34 45h26l6 18c0 4-2 5-5 5H32c-3 0-5-2-4-5z" fill="#d5d8da"/><path d="M36 50h22l3 12H32z" fill="#8f969a"/><path d="M40 52l6 4-4 4zM50 54l5 4-5 3z" fill="#f4f4f4"/></symbol>
  <symbol id="d-folder" viewBox="0 0 68 72"><path d="M14 0h26v24H14z" fill="#5b9c69"/><path d="M12 6h30l12 16v6H12z" fill="#eef0ee"/><path d="M30 4h8v24h-8z" fill="#3b3f3c"/><path d="M0 22c0-4 2-7 5-7h15c4 0 4 5 8 5h34c4 0 6 2 6 5v8H0z" fill="#4ba6de"/><rect x="0" y="26" width="68" height="46" rx="5" fill="#72c5f5"/><path d="M1 66h66" stroke="#5bb0e3" stroke-width="1.500"/></symbol>
  <symbol id="d-apps" viewBox="0 0 60 68"><rect x="7" y="1" width="46" height="24" rx="10" fill="#f0a33b"/><circle cx="30" cy="12" r="12" fill="#dfe7f2"/><circle cx="30" cy="12" r="8" fill="#5a8fd8"/><rect y="10" width="60" height="58" rx="14" fill="url(#gBlue)"/><g stroke="#fff" stroke-width="4.500" stroke-linecap="round"><path d="M33 23 20 45M27 23l19 33M10 46h24M43 46h7M15 52l-2 3"/></g></symbol>
  <symbol id="d-trash" viewBox="0 0 58 74"><path d="M2 12h54l-6 56c-1 4-4 6-9 6H17c-5 0-8-2-9-6z" fill="url(#gTrash)"/><ellipse cx="29" cy="12" rx="27" ry="6" fill="#6c6f71"/><path d="M2 10l8-7 6 4 6-7 8 6 7-6 7 6 6-2 5 8-10 5-7-3-8 4-8-4-8 3z" fill="#e4e5e6"/><path d="M14 8l5 5M24 5l3 8M38 7l-4 7M44 9l-3 5" stroke="#60656b" stroke-width="2"/><path d="M23 9l5-2 2 5z" fill="#5ec0c9"/><path d="M37 12l4-4 1 6z" fill="#b5623c"/></symbol>
</svg>

<div class="relative flex h-[2234px] w-[3456px] flex-col bg-[linear-gradient(90deg,#000_0%,#020000_26%,#1a0504_34%,#2a0806_50%,#380a08_64%,#4c1020_74%,#55306a_79%,#7d6cb0_82%,#d2d0e0_86.600%,#000_86.800%,#0c0410_90%,#2b1429_100%)]">

  <!-- menu bar -->
  <header class="flex h-[76px] shrink-0 items-center border-b-2 border-black bg-[linear-gradient(90deg,#1d0d17_0%,#21101b_30%,#200b14_50%,#1d060d_65%,#130406_100%)] text-[26px] font-medium text-[#ececec]">
    <svg class="ml-[40px] mb-1 h-[31px] w-[26px] shrink-0 fill-[#e6e6e6]"><use href="#apple"/></svg>
    <span class="fit ml-[41px] w-[101px] font-bold">Chrome</span>
    <span class="fit ml-[41px] w-[42px]">File</span>
    <span class="fit ml-[42px] w-[46px]">Edit</span>
    <span class="fit ml-[42px] w-[58px]">View</span>
    <span class="fit ml-[42px] w-[86px]">History</span>
    <span class="fit ml-[42px] w-[133px]">Bookmarks</span>
    <span class="fit ml-[42px] w-[91px]">Profiles</span>
    <span class="fit ml-[42px] w-[42px]">Tab</span>
    <span class="fit ml-[42px] w-[96px]">Window</span>
    <span class="fit ml-[41px] w-[55px]">Help</span>
    <div class="flex-1"></div>
    <svg class="h-8 w-8 shrink-0" viewBox="0 0 32 32"><circle cx="16" cy="16" r="16" fill="#e6e6e6"/><path d="M28 4 12 19l12 12" stroke="#1b070d" stroke-width="2.600" fill="none"/><path d="M26 12c3 3 2 7-1 8" stroke="#1b070d" stroke-width="2" fill="none"/></svg>
    <svg class="ml-[50px] h-[26px] w-[26px] shrink-0" viewBox="0 0 26 26"><path d="M9 0v26M13 0v26M17 0v26M0 9h26M0 13h26M0 17h26" stroke="#e6e6e6" stroke-width="2"/><rect x="6.500" y="6.500" width="13" height="13" rx="2" fill="#1b070d" stroke="#e6e6e6" stroke-width="5"/></svg>
    <span class="fit ml-[17px] w-[70px] font-normal">25.2%</span>
    <svg class="ml-[25px] h-[26px] w-[26px] shrink-0" viewBox="0 0 26 26"><path d="M2 19 19 2l5 5L7 24z" fill="none" stroke="#e6e6e6" stroke-width="3"/><path d="M6 15l5 5M11 10l5 5M15.500 5.500l5 5" stroke="#e6e6e6" stroke-width="2.500"/></svg>
    <div class="ml-[15px] flex w-[72px] flex-col text-[16px] leading-[20px]"><span class="fit w-[62px]">5.33 GB</span><span class="fit w-[72px]">25.85 GB</span></div>
    <svg class="ml-[24px] h-[18px] w-[33px] shrink-0" viewBox="0 0 33 18"><rect x="1" y="1" width="28" height="16" rx="3" fill="none" stroke="#e6e6e6" stroke-width="2"/><rect x="0" y="0" width="20" height="18" rx="3" fill="#e6e6e6"/><path d="M30 4v10" stroke="#e6e6e6" stroke-width="3"/></svg>
    <span class="fit ml-[12px] w-[51px] font-normal">63%</span>
    <svg class="ml-[22px] h-6 w-[26px] shrink-0" viewBox="0 0 26 24"><path d="M6 23V2M1 7l5-5 5 5M20 1v21M15 17l5 5 5-5" stroke="#e6e6e6" stroke-width="3" fill="none"/></svg>
    <div class="ml-[25px] flex w-[62px] flex-col text-[16px] leading-[20px]"><span class="fit w-[62px]">0.0 kb/s</span><span class="fit w-[62px]">0.0 kb/s</span></div>
    <svg class="ml-[72px] h-[22px] w-8 shrink-0" viewBox="0 0 32 22"><rect width="32" height="22" fill="#eee"/><path d="M0 1.700h32M0 5.100h32M0 8.500h32M0 11.900h32M0 15.300h32M0 20h32" stroke="#a33340" stroke-width="1.800"/><rect width="14" height="12" fill="#46508c"/><path d="M1.500 2.500h12M1.500 5.500h12M1.500 8.500h12" stroke="#c9cce0" stroke-width="1" stroke-dasharray="1 1.600"/></svg>
    <svg class="ml-[49px] h-[27px] w-[27px] shrink-0" viewBox="0 0 27 27"><circle cx="13.500" cy="13.500" r="12" fill="none" stroke="#e6e6e6" stroke-width="2.400"/><path d="M10 8v11l8.500-5.500z" fill="#e6e6e6"/></svg>
    <svg class="ml-[44px] h-[25px] w-[52px] shrink-0" viewBox="0 0 52 25"><rect x="1" y="1" width="44" height="23" rx="6.500" fill="none" stroke="#857c7e" stroke-width="2"/><rect x="4" y="4" width="24" height="17" rx="4" fill="#e6e6e6"/><path d="M48 8.500c3.500 1 3.500 7 0 8z" fill="#857c7e"/></svg>
    <svg class="ml-[45px] h-6 w-[33px] shrink-0" viewBox="0 0 33 24"><g fill="none" stroke="#e6e6e6" stroke-width="3.600"><path d="M1.500 8.500c8.500-8 21.500-8 30 0"/><path d="M7 14.300c5.500-5 13.500-5 19 0"/></g><path d="M16.500 24l-5.500-6c3-2.700 8-2.700 11 0z" fill="#e6e6e6"/></svg>
    <svg class="ml-[48px] h-[27px] w-[27px] shrink-0" viewBox="0 0 27 27"><circle cx="11" cy="11" r="9" fill="none" stroke="#e6e6e6" stroke-width="2.600"/><path d="M17.500 17.500l8 8" stroke="#e6e6e6" stroke-width="3"/></svg>
    <svg class="ml-[45px] h-[27px] w-[29px] shrink-0" viewBox="0 0 29 27"><rect x="1.200" y="1.200" width="26.600" height="10" rx="5" fill="none" stroke="#e6e6e6" stroke-width="2.400"/><circle cx="7" cy="6.200" r="3.500" fill="#e6e6e6"/><rect x="0" y="15" width="29" height="12" rx="6" fill="#e6e6e6"/><circle cx="22.500" cy="21" r="3.800" fill="#1b070d"/></svg>
    <svg class="ml-[43px] h-7 w-7 shrink-0" viewBox="0 0 28 28"><circle cx="14" cy="14" r="14" fill="url(#gSiri)"/></svg>
    <span class="fit ml-[43px] w-[132px]">Mon Jul 11</span>
    <span class="fit ml-[17px] mr-[34px] w-[100px]">9:31 PM</span>
  </header>

  <!-- browser window -->
  <div class="relative flex h-[2026px] shrink-0 flex-col overflow-hidden rounded-[20px] bg-[#48555e]">

    <!-- tab strip -->
    <div class="flex h-[84px] shrink-0 items-start bg-[#2f363d] pt-[16px]">
      <div class="flex w-[188px] gap-4 pl-[42px] pt-[15px]">
        <i class="h-6 w-6 rounded-full bg-[#ec6a5e]"></i><i class="h-6 w-6 rounded-full bg-[#f4bf4f]"></i><i class="h-6 w-6 rounded-full bg-[#61c554]"></i>
      </div>
      <div class="flex pt-[15px] [&>b]:flex [&>b]:h-10 [&>b]:w-[76px] [&>b]:items-center [&>b]:border-r-2 [&>b]:border-[#6b7072] [&>b]:pl-[14px] [&>b]:font-normal [&_svg]:h-8 [&_svg]:w-8">
        <b><svg><use href="#f-java"/></svg></b><b><svg><use href="#f-github"/></svg></b><b><svg><use href="#f-yt"/></svg></b><b><svg><use href="#f-globe"/></svg></b><b><svg><use href="#f-outlook"/></svg></b><b><svg><use href="#f-forms"/></svg></b><b><svg><use href="#f-globe"/></svg></b><b><svg><use href="#f-fb"/></svg></b><b><svg><use href="#f-book"/></svg></b><b><svg><use href="#f-google"/></svg></b><b><svg><use href="#f-so"/></svg></b><b><svg><use href="#f-leaf"/></svg></b><b><svg><use href="#f-globe"/></svg></b><b><svg><use href="#f-google"/></svg></b><b><svg><use href="#f-jx"/></svg></b><b><svg><use href="#f-google"/></svg></b><b><svg><use href="#f-jb"/></svg></b><b><svg><use href="#f-jb2"/></svg></b><b><svg><use href="#f-google"/></svg></b><b><svg><use href="#f-globe"/></svg></b><b><svg><use href="#f-google"/></svg></b><b><svg><use href="#f-leaf"/></svg></b><b><svg><use href="#f-globe"/></svg></b><b><svg><use href="#f-code"/></svg></b><b><svg><use href="#f-google"/></svg></b><b><svg><use href="#f-google"/></svg></b><b><svg><use href="#f-leaf"/></svg></b><b><svg><use href="#f-google"/></svg></b>
        <div class="flex h-10 w-[60px] items-center pl-[14px]"><svg><use href="#f-m"/></svg></div>
      </div>
      <svg class="h-[68px] w-[106px] shrink-0" viewBox="0 0 106 68"><path d="M0 68c9 0 14-5 14-14V16C14 6 20 0 30 0h46c10 0 16 6 16 16v38c0 9 5 14 14 14z" fill="#48555e"/><path d="M34.500 29c-4 3-4 9 0 12M31 35h4" stroke="#fff" stroke-width="2.400" fill="none"/><path d="M52 26l16 16M68 26 52 42" stroke="#fff" stroke-width="2.600"/></svg>
      <div class="flex pt-[15px] [&>b]:flex [&>b]:h-10 [&>b]:w-[74px] [&>b]:items-center [&>b]:border-r-2 [&>b]:border-[#6b7072] [&>b]:pl-[14px] [&>b]:font-normal [&_svg]:h-8 [&_svg]:w-8">
        <div class="flex h-10 w-[62px] items-center border-r-2 border-[#6b7072]"><svg><use href="#f-google"/></svg></div>
        <div class="flex h-10 w-[76px] items-center border-r-2 border-[#6b7072] pl-[14px]"><svg><use href="#f-so"/></svg></div>
        <div class="flex h-10 w-[74px] items-center border-r-2 border-[#6b7072] pl-[14px]"><svg><use href="#f-google"/></svg></div>
        <b><svg><use href="#f-so"/></svg></b><b><svg><use href="#f-w3r"/></svg></b><b><svg><use href="#f-so"/></svg></b><b><svg><use href="#f-w3r"/></svg></b><b><svg><use href="#f-google"/></svg></b><b><svg><use href="#f-so"/></svg></b><b><svg><use href="#f-db"/></svg></b>
      </div>
      <svg class="ml-[32px] mt-[22px] h-6 w-6 shrink-0" viewBox="0 0 24 24"><path d="M12 1v22M1 12h22" stroke="#fff" stroke-width="4" stroke-linecap="round"/></svg>
      <svg class="ml-auto mr-[34px] mt-[28px] h-3 w-[20px] shrink-0" viewBox="0 0 20 12"><path d="M2 2l8 8 8-8" stroke="#fff" stroke-width="3" fill="none"/></svg>
    </div>

    <!-- toolbar -->
    <div class="flex h-[74px] shrink-0 items-center border-b-2 border-[#747a7d] bg-[#48555e]">
      <svg class="ml-[30px] h-[26px] w-[28px] shrink-0" viewBox="0 0 28 26"><path d="M28 13H2M14 1 2 13l12 12" stroke="#fff" stroke-width="3" fill="none"/></svg>
      <svg class="ml-[36px] h-[26px] w-[28px] shrink-0" viewBox="0 0 28 26"><path d="M0 13h26M14 1l12 12-12 12" stroke="#8b9296" stroke-width="3" fill="none"/></svg>
      <svg class="ml-[36px] h-[28px] w-[30px] shrink-0" viewBox="0 0 30 28"><path d="M25 18.500A12 12 0 1 1 23 6" stroke="#fff" stroke-width="3.200" fill="none"/><path d="M28 0v11.500H16.500z" fill="#fff"/></svg>
      <svg class="ml-[34px] h-[28px] w-[28px] shrink-0" viewBox="0 0 28 28"><path d="M2 13 14 2l12 11M5.500 11v15h17V11" stroke="#fff" stroke-width="3.200" fill="none"/></svg>
      <div class="ml-[30px] flex h-14 w-[2768px] shrink-0 items-center rounded-full bg-[#3d4349] pl-[23px] text-[28px]">
        <svg class="h-7 w-7 shrink-0" viewBox="0 0 28 28"><circle cx="14" cy="14" r="12.500" fill="none" stroke="#c3c7ca" stroke-width="2.500"/><path d="M14 12.500v8M14 7v3" stroke="#c3c7ca" stroke-width="2.800"/></svg>
        <span class="fit ml-[18px] w-[120px] text-white">localhost</span><span class="fit w-[302px] text-[#b6babd]">:8080/etdm/athlete/list</span>
        <svg class="ml-auto h-[28px] w-[28px] shrink-0" viewBox="0 0 28 28"><circle cx="11" cy="11" r="9.500" fill="none" stroke="#bcbfc1" stroke-width="2.500"/><path d="M6 11h10" stroke="#bcbfc1" stroke-width="2"/><path d="M17.500 17.500l8 8" stroke="#bcbfc1" stroke-width="3.500"/></svg>
        <svg class="ml-[38px] h-[30px] w-[24px] shrink-0" viewBox="0 0 24 30"><path d="M8 10H5a3 3 0 0 0-3 3v12a3 3 0 0 0 3 3h14a3 3 0 0 0 3-3V13a3 3 0 0 0-3-3h-3M12 19V3M6.500 8 12 2.500 17.500 8" stroke="#bcbfc1" stroke-width="2.600" fill="none"/></svg>
        <svg class="ml-[36px] mr-[20px] h-[30px] w-[32px] shrink-0" viewBox="0 0 32 30"><path d="M16 4l3.400 8 8.600.8-6.500 5.700 2 8.500-7.500-4.500L8.500 27l2-8.500L4 12.800l8.600-.8z" fill="none" stroke="#bcbfc1" stroke-width="2.600"/></svg>
      </div>
      <svg class="ml-[29px] h-[30px] w-[28px] shrink-0" viewBox="0 0 28 30"><path d="M0 30 10 7l5 8L28 0 15 26l-5-8z" fill="#a9a9a9"/></svg>
      <svg class="ml-[36px] h-[30px] w-[30px] shrink-0" viewBox="0 0 30 30"><g fill="none" stroke="#50504f" stroke-width="4"><path d="M12 27A12.500 12.500 0 0 1 6 6M18 3a12.500 12.500 0 0 1 6 21"/></g><path d="M1 1h11v11zM29 29H18V18z" fill="#50504f"/><circle cx="15" cy="15" r="4.500" fill="#ea3323"/></svg>
      <svg class="ml-[34px] h-[30px] w-[30px] shrink-0" viewBox="2 1 21 21"><path fill="#fff" d="M20.500 11H19V7c0-1.100-.9-2-2-2h-4V3.500a2.500 2.500 0 0 0-5 0V5H4c-1.100 0-1.990.9-1.990 2v3.800H3.500c1.490 0 2.700 1.210 2.700 2.700s-1.210 2.700-2.700 2.700H2V20c0 1.100.9 2 2 2h3.800v-1.500c0-1.490 1.210-2.700 2.700-2.700 1.490 0 2.700 1.210 2.700 2.700V22H17c1.100 0 2-.9 2-2v-4h1.500a2.500 2.500 0 0 0 0-5z"/></svg>
      <svg class="ml-[35px] h-7 w-7 shrink-0" viewBox="0 0 28 28"><path d="M0 0h28v28H0zM4 4v20h14V4z" fill="#fff" fill-rule="evenodd"/></svg>
      <div class="ml-[28px] flex h-11 w-11 items-center justify-center rounded-full bg-[#9b4bb3] pb-[2px] text-[24px] text-white">t</div>
      <svg class="ml-[39px] h-7 w-[6px] shrink-0" viewBox="0 0 6 28"><circle cx="3" cy="3.500" r="3" fill="#fff"/><circle cx="3" cy="14" r="3" fill="#fff"/><circle cx="3" cy="24.500" r="3" fill="#fff"/></svg>
    </div>

    <!-- page navbar -->
    <nav class="flex h-[101px] shrink-0 items-center bg-linear-to-b from-[#6eb2e6] to-[#4a98dd] text-[28.800px] text-white [text-shadow:0_2px_2px_rgba(0,0,0,0.1)]">
      <span class="fit ml-[30px] w-[658px] text-[36px]">Temuujin's eTDM : : : Athlete Management</span>
      <i class="ml-[101px] h-[72px] w-px bg-white/90"></i>
      <span class="fit ml-[73px] w-[107px] text-white/80">Athletes</span>
      <i class="ml-[72px] h-[72px] w-px bg-white/90"></i>
      <span class="fit ml-[72px] w-[170px] text-white/80">Elite Athletes</span>
      <div class="flex-1"></div>
      <span class="fit w-[214px]">Welcome, Guest</span>
      <button class="ml-[28px] mr-[29px] flex h-[70px] w-[136px] items-center justify-center rounded-[7px] border-2 border-[#dfe3e6] bg-linear-to-b from-white to-[#dde0e4] text-[#495057]"><span class="fit w-[89px] text-left">Sign In</span></button>
    </nav>

    <!-- page body -->
    <main class="h-[1599px] shrink-0 bg-white pt-[71px] text-[28.800px] leading-[43.200px] text-[#495057]">
      <div class="flex h-[70px] pl-[702px]">
        <h1 class="fit w-[519px] pt-[3px] text-[50.400px] font-medium leading-[62px] text-[#54a1e1]">All Athletes Information</h1>
        <button class="ml-[1002px] flex h-[69px] w-[340px] items-center justify-center rounded-[7px] border-2 border-[#54a3e4] bg-linear-to-b from-[#6eb2e6] to-[#4a98dd] text-white [text-shadow:0_2px_2px_rgba(0,0,0,0.1)]"><span class="fit w-[292px] text-left">Register a new Athlete</span></button>
      </div>
      <hr class="ml-[729px] mt-[34px] w-[1998px] border-t-2 border-[#e6e6e6]">
      <table class="ml-[729px] mt-[29px] w-[1998px] table-fixed border-collapse text-left [&_td]:h-[131.400px] [&_td]:border-t-2 [&_td]:border-[#dee2e6] [&_td]:pl-[22px] [&_td]:pt-[21px] [&_td]:align-top [&_th]:h-[133px] [&_th]:pb-[22px] [&_th]:pl-[22px] [&_th]:align-bottom [&_th]:font-bold">
        <colgroup><col class="w-[69px]"><col class="w-[165px]"><col class="w-[293px]"><col class="w-[216px]"><col class="w-[194px]"><col class="w-[293px]"><col class="w-[191px]"><col class="w-[194px]"><col class="w-[383px]"></colgroup>
        <thead class="border-b-4 border-t-2 border-[#dee2e6]">
          <tr>
            <th>#</th>
            <th><span class="fit w-[58px]">SSN</span></th>
            <th><span class="fit w-[138px]">Full Name</span></th>
            <th><span class="fit w-[88px]">Phone</span></th>
            <th><span class="fit w-[100px]">Date of</span><span class="fit w-[68px]">Birth</span></th>
            <th><span class="fit w-[100px]">Date of</span><span class="fit w-[170px]">Registration</span></th>
            <th><span class="fit w-[100px]">Medals</span><span class="fit w-[58px]">won</span></th>
            <th><span class="fit w-[88px]">Salary</span></th>
            <th><span class="fit w-[76px]">Email</span></th>
          </tr>
        </thead>
        <tbody>
          <tr class="bg-[#f2f2f2]">
            <td><span class="fit w-[19px]">1.</span></td>
            <td><span class="fit w-[107px]">123-45-</span><span class="fit w-[34px]">68</span></td>
            <td><span class="fit w-[153px]">Anna-Marie</span><span class="fit w-[132px]">Rodriquez</span></td>
            <td><span class="fit w-[136px]">(641) 451-</span><span class="fit w-[64px]">0001</span></td>
            <td><span class="fit w-[129px]">2000-05-</span><span class="fit w-[30px]">21</span></td>
            <td><span class="fit w-[152px]">2014-11-09</span></td>
            <td>3</td>
            <td><span class="fit w-[134px]">$4,562.00</span></td>
            <td><span class="fit w-[226px]">amrod@gmail.mx</span></td>
          </tr>
          <tr>
            <td><span class="fit w-[23px]">2.</span></td>
            <td><span class="fit w-[107px]">123-45-</span><span class="fit w-[32px]">70</span></td>
            <td><span class="fit w-[197px]">Temuujin Tsogt</span></td>
            <td></td>
            <td><span class="fit w-[126px]">1990-09-</span><span class="fit w-[34px]">04</span></td>
            <td><span class="fit w-[151px]">2015-01-01</span></td>
            <td><span class="fit w-[34px]">20</span></td>
            <td><span class="fit w-[150px]">$20,000.00</span></td>
            <td><span class="fit w-[339px]">temuujintsogt@gmail.com</span></td>
          </tr>
          <tr class="bg-[#f2f2f2]">
            <td><span class="fit w-[23px]">3.</span></td>
            <td><span class="fit w-[107px]">123-45-</span><span class="fit w-[32px]">67</span></td>
            <td><span class="fit w-[132px]">Usain Bolt</span></td>
            <td></td>
            <td><span class="fit w-[120px]">1996-12-</span><span class="fit w-[34px]">03</span></td>
            <td><span class="fit w-[156px]">2014-01-04</span></td>
            <td><span class="fit w-[29px]">16</span></td>
            <td><span class="fit w-[143px]">$15,005.97</span></td>
            <td></td>
          </tr>
          <tr>
            <td><span class="fit w-[23px]">4.</span></td>
            <td><span class="fit w-[107px]">123-45-</span><span class="fit w-[34px]">69</span></td>
            <td><span class="fit w-[229px]">Victor Luiz Garcia</span></td>
            <td></td>
            <td><span class="fit w-[150px]">1998-11-07</span></td>
            <td><span class="fit w-[149px]">2013-11-07</span></td>
            <td>2</td>
            <td><span class="fit w-[140px]">$17,750.05</span></td>
            <td></td>
          </tr>
        </tbody>
      </table>
    </main>

    <footer class="flex h-[54px] shrink-0 items-center justify-between bg-[#f4f4f4] pl-[30px] pr-[30px] text-[28.800px] text-[#495057]">
      <span class="fit w-[563px]">Temuujin Tsogt ::: CS425-SWE Spring MVC</span>
      <span class="fit w-[383px]">eTDM © FinalExam July 2022</span>
    </footer>

    <!-- downloads shelf -->
    <div class="flex h-[114px] shrink-0 items-center border-t-2 border-[#6b787d] bg-linear-to-b from-[#48555e] to-[#434e58] text-[26px] text-white">
      <svg class="ml-[44px] mb-[3px] h-[28px] w-[23px] shrink-0" viewBox="0 0 23 28"><path d="M2 0h13l8 8v18a2 2 0 0 1-2 2H2a2 2 0 0 1-2-2V2a2 2 0 0 1 2-2z" fill="#f4f4f4"/><path d="M15 0l8 8h-8z" fill="#bbb"/><path d="M11 0v15" stroke="#55585a" stroke-width="3.500" stroke-dasharray="2 1"/></svg>
      <span class="fit ml-[32px] w-[276px]">Material_Theme_....zip</span>
      <svg class="ml-[42px] mb-[2px] h-3 w-[18px] shrink-0" viewBox="0 0 18 12"><path d="M1.500 11 9 3l7.500 8" stroke="#fff" stroke-width="3" fill="none"/></svg>
      <i class="ml-[37px] h-[88px] w-[2px] bg-[#79858b]"></i>
      <div class="flex-1"></div>
      <button class="mb-[3px] flex h-16 w-[165px] items-center justify-center rounded-lg border border-[#3a444c] text-[24px] font-semibold text-[#aec5f8]"><span class="fit w-[100px] text-left">Show All</span></button>
      <svg class="ml-[27px] mr-[27px] mb-[2px] h-[18px] w-[18px] shrink-0" viewBox="0 0 18 18"><path d="M1 1l16 16M17 1 1 17" stroke="#fff" stroke-width="3"/></svg>
    </div>
    <div class="pointer-events-none absolute inset-0 rounded-[20px] border-2 border-white/25"></div>
  </div>

  <!-- edges of the windows stacked behind -->
  <div class="h-[20px] shrink-0 bg-black"><div class="h-[9px] rounded-b-[20px] border-b border-[#222727] bg-[#0b0e0f]"></div><div class="h-[9px] rounded-b-[20px] border-b border-[#16181a] bg-[#050607]"></div></div>

  <!-- dock -->
  <div class="ml-[66px] flex h-[102px] w-[3324px] shrink-0 items-start rounded-[28px] border-2 border-white/15 bg-[linear-gradient(90deg,#141414_0%,#161414_22%,#241617_34%,#281415_50%,#351717_62%,#481b1d_72%,#3a1f2e_77%,#453b5c_82%,#4a4064_85%,#241c26_89%,#1a1614_92%,#2b1c24_100%)] pl-[4px] [&>div]:relative [&>div]:flex [&>div]:h-[98px] [&>div]:w-[83px] [&>div]:shrink-0 [&>div]:flex-col [&>div]:items-center [&>div]:pt-[14px] [&>div>svg]:h-16 [&>div>svg]:w-16 [&>div>svg]:shrink-0 [&_i]:absolute [&_i]:bottom-[2px] [&_i]:h-2 [&_i]:w-2 [&_i]:rounded-full [&_i]:bg-white/55">
    <div><svg><use href="#d-finder"/></svg><i></i></div>
    <div><svg><use href="#d-launch"/></svg></div>
    <div><svg><use href="#d-safari"/></svg><i></i></div>
    <div><svg><use href="#d-chrome"/></svg><i></i></div>
    <div><svg><use href="#d-messages"/></svg></div>
    <div><svg><use href="#d-mail"/></svg></div>
    <div><svg><use href="#d-maps"/></svg><i></i></div>
    <div><svg><use href="#d-photos"/></svg></div>
    <div><svg><use href="#d-facetime"/></svg></div>
    <div><svg><use href="#d-cal"/></svg><i></i></div>
    <div><svg class="ml-1 w-[68px]!"><use href="#d-contacts"/></svg></div>
    <div><svg><use href="#d-rem"/></svg></div>
    <div><svg><use href="#d-notes"/></svg></div>
    <div><svg><use href="#d-tv"/></svg></div>
    <div><svg><use href="#d-news"/></svg></div>
    <div><svg><use href="#d-outlook"/></svg><i></i></div>
    <div><svg><use href="#d-key"/></svg></div>
    <div><svg><use href="#d-num"/></svg></div>
    <div><svg><use href="#d-pages"/></svg></div>
    <div><svg><use href="#d-store"/></svg></div>
    <div><svg><use href="#d-settings"/></svg><span class="absolute right-[-2px] top-[6px] flex h-[30px] w-[30px] items-center justify-center rounded-full bg-[#e64e3d] text-[18px] text-white">2</span></div>
    <div><svg class="-mt-1 h-[72px]! w-[72px]!"><use href="#d-steam"/></svg></div>
    <div><svg><use href="#d-teams"/></svg><i></i></div>
    <div><svg><use href="#d-pc"/></svg></div>
    <div><svg><use href="#d-term"/></svg><i></i></div>
    <div><svg><use href="#d-pg"/></svg></div>
    <div><svg><use href="#d-wa"/></svg></div>
    <div><svg><use href="#d-dbv"/></svg><i></i></div>
    <div><svg class="-mt-1 h-[72px]! w-[72px]!"><use href="#d-ij"/></svg><i></i></div>
    <div><svg><use href="#d-vsc"/></svg><i></i></div>
    <div><svg class="-mt-[7px] h-[78px]! w-[78px]!"><use href="#d-mysql"/></svg><i></i></div>
    <div><svg><use href="#d-postman"/></svg><i></i></div>
    <b class="ml-[19px] mr-[17px] mt-[12px] h-[74px] w-[2px] shrink-0 bg-white/25"></b>
    <div><svg><use href="#d-msgr"/></svg><i></i></div>
    <div><svg class="-mt-[8px] h-[76px]!"><use href="#d-te"/></svg><i></i></div>
    <div><svg><use href="#d-word"/></svg><i></i></div>
    <div><svg class="h-[68px]! w-[66px]!"><use href="#d-prev"/></svg><i></i></div>
    <b class="ml-[20px] mr-[16px] mt-[12px] h-[74px] w-[2px] shrink-0 bg-white/25"></b>
    <div><svg class="-mt-[8px] h-[72px]! w-[68px]!"><use href="#d-folder"/></svg></div>
    <div><svg class="-mt-[4px] h-[68px]! w-[60px]!"><use href="#d-apps"/></svg></div>
    <div><svg class="-mt-[7px] h-[74px]! w-[58px]!"><use href="#d-trash"/></svg></div>
  </div>
  <svg class="ml-[862px] h-[10px] w-[28px] shrink-0" viewBox="0 0 28 10"><path d="M0 10 10 0h14L12 10z" fill="#b81f38"/></svg>
</div>

<script>
// Tracks each label so that its text spans exactly the width of its box.
const fit = el => {
  const width = Number(el.className.match(/w-\[(\d+)px\]/)[1]);
  el.style.cssText = 'display:block;white-space:nowrap;flex-shrink:0;letter-spacing:0';
  if (Math.abs(el.getBoundingClientRect().width - width) > 1) return;
  const range = document.createRange();
  range.selectNodeContents(el);
  el.style.letterSpacing = (width - range.getBoundingClientRect().width) / el.textContent.length + 'px';
};
const labels = document.querySelectorAll('.fit');
const fitAll = () => labels.forEach(fit);
const observer = new ResizeObserver(entries => entries.forEach(e => fit(e.target)));
labels.forEach(el => observer.observe(el));
window.addEventListener('load', fitAll);
document.fonts.ready.then(fitAll);
</script>
</body>
</html>
